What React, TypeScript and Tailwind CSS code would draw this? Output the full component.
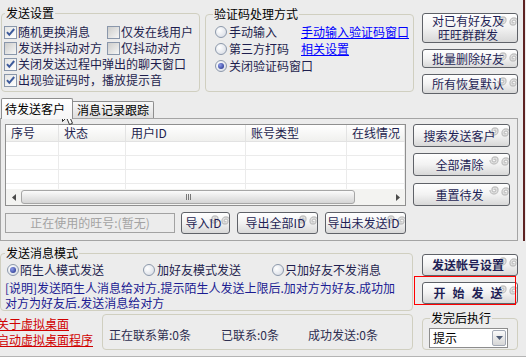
import React from "react";

function Swirl() {
  return (
    <svg className="absolute right-[-2px] top-[-1px]" width="24" height="17" viewBox="0 0 24 17" fill="none" stroke="#c3c3c3" strokeWidth="1.4">
      <path d="M8 7 m-1 0 a1 1 0 1 1 2 0 a2 2 0 1 1 -4 0 a3 3 0 1 1 6 0 a4 4 0 1 1 -8 0" />
      <path d="M18 9 m1 0 a1 1 0 1 1 -2 0 a2 2 0 1 1 4 0 a3 3 0 1 1 -6 0 a4 4 0 1 1 8 0" />
    </svg>
  );
}

function Btn({ className = "", children, bold = false }: { className?: string; children: React.ReactNode; bold?: boolean }) {
  return (
    <div
      className={
        "relative shrink-0 overflow-hidden flex items-center justify-center rounded-[3px] border border-[#5f6268] bg-linear-to-b from-[#ffffff] via-[#f2f2f2] to-[#d8d8d8] text-[#1f1f55] pr-[4px] " +
        (bold ? "font-bold " : "") +
        className
      }
    >
      <Swirl />
      <span className="relative whitespace-nowrap text-center">{children}</span>
    </div>
  );
}

function Check({ checked = false }: { checked?: boolean }) {
  return (
    <span
      className={
        "relative block w-[13px] h-[13px] shrink-0 border border-[#8a97ab] bg-linear-to-br " +
        (checked ? "from-[#e4e4e2] to-[#ffffff]" : "from-[#cdcdcb] to-[#f6f6f6]")
      }
    >
      {checked && (
        <svg className="absolute left-0 top-0" width="11" height="11" viewBox="0 0 11 11">
          <path d="M2 5.2 L4.3 7.8 L9.2 2" stroke="#3e5b9c" strokeWidth="2" fill="none" />
        </svg>
      )}
    </span>
  );
}

function Radio({ on = false }: { on?: boolean }) {
  return (
    <span className="flex items-center justify-center w-[12px] h-[12px] shrink-0 rounded-full border border-[#8d99ab] bg-[radial-gradient(circle_at_35%_35%,#ffffff,#d3d8e2)]">
      {on && <span className="block w-[6px] h-[6px] rounded-full bg-[radial-gradient(circle_at_35%_35%,#8d9bea,#1a2a82)]" />}
    </span>
  );
}

function CB({ label, checked = false, className = "" }: { label: string; checked?: boolean; className?: string }) {
  return (
    <div className={"flex items-center gap-[1px] " + className}>
      <Check checked={checked} />
      <span className="whitespace-nowrap">{label}</span>
    </div>
  );
}

const cols = [
  { c: "w-[53px]", t: "序号" },
  { c: "w-[67px]", t: "状态" },
  { c: "w-[120px]", t: "用户ID" },
  { c: "w-[101px]", t: "账号类型" },
  { c: "w-[58px]", t: "在线情况" },
];

export default function App() {
  return (
    <div className="relative w-[526px] h-[357px] overflow-hidden bg-[#ececec] font-['Noto_Sans_CJK_SC',sans-serif] text-[12px] leading-[14px] text-[#1e1e4e]">
      {/* top section */}
      <div className="w-[525px] h-[241px] border-r-2 border-[#5e2323] flex flex-col">
        <div className="h-[98px] flex shrink-0">
          <fieldset className="ml-[1px] mt-[6px] w-[199px] h-[86px] border border-[#d0cfc0] rounded-[4px]">
            <legend className="ml-[3px] px-[1px] text-black">发送设置</legend>
            <div className="pl-[2px] pt-[4px] flex flex-col">
              <div className="flex h-[16px] items-center">
                <CB checked label="随机更换消息" className="w-[103px]" />
                <CB label="仅发在线用户" />
              </div>
              <div className="flex h-[16px] items-center">
                <CB label="发送并抖动对方" className="w-[103px]" />
                <CB label="仅抖动对方" />
              </div>
              <div className="flex h-[16px] items-center">
                <CB checked label="关闭发送过程中弹出的聊天窗口" />
              </div>
              <div className="flex h-[16px] items-center">
                <CB checked label="出现验证码时，播放提示音" />
              </div>
            </div>
          </fieldset>

          <fieldset className="ml-[5px] mt-[7px] w-[209px] h-[85px] border border-[#d0cfc0] rounded-[4px]">
            <legend className="ml-[7px] px-[1px] text-black">验证码处理方式</legend>
            <div className="pl-[9px] pt-[2px] flex flex-col">
              <div className="flex h-[17px] items-center">
                <div className="w-[86px] flex items-center gap-[2px]">
                  <Radio />
                  <span>手动输入</span>
                </div>
                <span className="text-[#0000ff] underline whitespace-nowrap">手动输入验证码窗口</span>
              </div>
              <div className="flex h-[17px] items-center">
                <div className="w-[86px] flex items-center gap-[2px]">
                  <Radio />
                  <span>第三方打码</span>
                </div>
                <span className="text-[#0000ff] underline">相关设置</span>
              </div>
              <div className="flex h-[17px] items-center">
                <div className="flex items-center gap-[2px]">
                  <Radio on />
                  <span>关闭验证码窗口</span>
                </div>
              </div>
            </div>
          </fieldset>

          <div className="ml-[8px] mt-[13px] w-[96px] flex flex-col">
            <Btn className="h-[30px] leading-[14px]">
              对已有好友及
              <br />
              旺旺群群发
            </Btn>
            <Btn className="mt-[6px] h-[19px]">批量删除好友</Btn>
            <Btn className="mt-[6px] h-[20px]">所有恢复默认</Btn>
          </div>
        </div>

        {/* tabs */}
        <div className="h-[20px] flex items-end pl-[1px] shrink-0 relative z-10">
          <div className="w-[72px] h-[21px] mb-[-1px] border border-b-0 border-[#8e8e8e] rounded-t-[2px] bg-linear-to-b from-[#ffffff] to-[#f6f6f6] flex items-center pl-[3px] text-black">
            待发送客户
          </div>
          <div className="w-[81px] h-[17px] border border-b-0 border-l-0 border-[#8e8e8e] rounded-tr-[2px] bg-linear-to-b from-[#f8f8f8] to-[#dedede] flex items-center pl-[4px] text-black">
            消息记录跟踪
          </div>
        </div>

        {/* panel */}
        <div className="w-[518px] h-[123px] border border-[#a4a4a4] flex pt-[5px] pl-[4px]">
          <div className="w-[401px] flex flex-col">
            <div className="h-[82px] border border-[#8f8f8f] bg-white flex flex-col overflow-hidden">
              <div className="h-[17px] flex shrink-0 bg-linear-to-b from-white to-[#f0f0ee] border-b border-[#e2e2e2]">
                {cols.map((c) => (
                  <div key={c.t} className={c.c + " shrink-0 pl-[5px] border-r border-[#e3e3e3] flex items-center text-[#1e1e4e]"}>
                    {c.t}
                  </div>
                ))}
              </div>
              <div className="flex-1 overflow-hidden">
                {[0, 1, 2, 3].map((r) => (
                  <div key={r} className="h-[14px] flex border-b border-[#ebebeb]">
                    {cols.map((c) => (
                      <div key={c.t} className={c.c + " shrink-0 border-r border-[#ebebeb]"} />
                    ))}
                  </div>
                ))}
              </div>
              <div className="h-[16px] shrink-0 flex items-center bg-[#f3f3f1]">
                <div className="w-[15px] h-full flex items-center justify-center">
                  <svg width="4" height="7" viewBox="0 0 4 7">
                    <path d="M4 0V7L0 3.5z" fill="#4a4a4a" />
                  </svg>
                </div>
                <div className="w-[334px] h-[14px] rounded-[3px] border border-[#a6a6a6] bg-linear-to-b from-[#fbfbfb] to-[#d5d5d5] flex items-center justify-center gap-[1px]">
                  <span className="block w-[1px] h-[6px] bg-[#777]" />
                  <span className="block w-[1px] h-[6px] bg-[#777]" />
                  <span className="block w-[1px] h-[6px] bg-[#777]" />
                </div>
                <div className="flex-1" />
                <div className="w-[15px] h-full flex items-center justify-center">
                  <svg width="4" height="7" viewBox="0 0 4 7">
                    <path d="M0 0V7L4 3.5z" fill="#4a4a4a" />
                  </svg>
                </div>
              </div>
            </div>
            <div className="mt-[6px] h-[22px] flex items-center">
              <div className="w-[170px] h-[20px] border border-[#a2a2a2] flex items-center justify-center text-[#a3a3a3]">
                正在使用的旺号:(暂无)
              </div>
              <Btn className="ml-[6px] w-[49px] h-[22px]">导入ID</Btn>
              <Btn className="ml-[7px] w-[81px] h-[22px]">导出全部ID</Btn>
              <Btn className="ml-[7px] w-[81px] h-[22px]">导出未发送ID</Btn>
            </div>
          </div>
          <div className="ml-[7px] w-[97px] flex flex-col">
            <Btn className="h-[23px]">搜索发送客户</Btn>
            <Btn className="mt-[6px] h-[23px]">全部清除</Btn>
            <Btn className="mt-[7px] h-[23px]">重置待发</Btn>
          </div>
        </div>
      </div>

      {/* bottom section */}
      <div className="h-[115px] flex">
        <div className="w-[414px] flex flex-col shrink-0">
          <fieldset className="mt-[5px] w-[413px] h-[65px] border border-[#d0cfc0] rounded-[4px]">
            <legend className="ml-[4px] px-[1px] text-black">发送消息模式</legend>
            <div className="pt-[2px] pl-[6px] h-[18px] flex items-center">
              <div className="w-[136px] flex items-center gap-[1px]">
                <Radio on />
                <span>陌生人模式发送</span>
              </div>
              <div className="w-[129px] flex items-center gap-[2px]">
                <Radio />
                <span>加好友模式发送</span>
              </div>
              <div className="flex items-center gap-[1px]">
                <Radio />
                <span>只加好友不发消息</span>
              </div>
            </div>
            <div className="mt-[2px] pl-[4px] leading-[15px] text-[#1b1b92] whitespace-nowrap">
              <div>[说明]发送陌生人消息给对方.提示陌生人发送上限后.加对方为好友.成功加</div>
              <div>对方为好友后.发送消息给对方</div>
            </div>
          </fieldset>
          <div className="mt-[3px] flex">
            <div className="w-[102px] -ml-[3px] pt-[2px] flex flex-col leading-[16px] text-[#d00000] underline whitespace-nowrap shrink-0">
              <span>关于虚拟桌面</span>
              <span>启动虚拟桌面程序</span>
            </div>
            <div className="ml-[3px] w-[311px] h-[36px] border border-[#d0cfc0] rounded-[4px] flex items-center pt-[5px] pl-[6px] text-[#2e2e50]">
              <span className="w-[112px]">正在联系第:0条</span>
              <span className="w-[87px]">已联系:0条</span>
              <span>成功发送:0条</span>
            </div>
          </div>
        </div>
        <div className="ml-[8px] w-[96px] flex flex-col">
          <Btn bold className="mt-[13px] h-[22px]">发送帐号设置</Btn>
          <Btn bold className="mt-[6px] h-[22px]">
            <span className="flex gap-[7px]">
              <span>开</span>
              <span>始</span>
              <span>发</span>
              <span>送</span>
            </span>
          </Btn>
          <fieldset className="mt-[7px] w-[96px] h-[39px] border border-[#d0cfc0] rounded-[4px]">
            <legend className="ml-[7px] px-[1px] text-black">发完后执行</legend>
            <div className="ml-[6px] mt-[3px] w-[79px] h-[20px] border border-[#8d8d8d] bg-white flex items-center">
              <span className="pl-[3px] flex-1 text-black">提示</span>
              <span className="w-[14px] h-[16px] mr-[1px] border border-[#a3a9b5] rounded-[2px] bg-linear-to-b from-[#fafafa] to-[#d6d6d6] flex items-center justify-center">
                <svg width="7" height="4" viewBox="0 0 7 4">
                  <path d="M0 0h7L3.5 4z" fill="#4d5a75" />
                </svg>
              </span>
            </div>
          </fieldset>
        </div>
      </div>
      <div className="h-[1px] bg-[#b4b4b4]" />

      {/* red annotation frame */}
      <div className="absolute left-[414px] top-[276px] w-[102px] h-[29px] border border-[#ff0000] pointer-events-none" />

      {/* mouse cursor */}
      <svg className="absolute left-[62px] top-[104px]" width="14" height="22" viewBox="0 0 14 22">
        <path d="M0.5 0.5 V17.5 L4.5 13.5 L7.5 20.5 L10.5 19.3 L7.5 12.5 H12.5 Z" fill="#ffffff" stroke="#303030" strokeWidth="1" />
      </svg>
    </div>
  );
}
